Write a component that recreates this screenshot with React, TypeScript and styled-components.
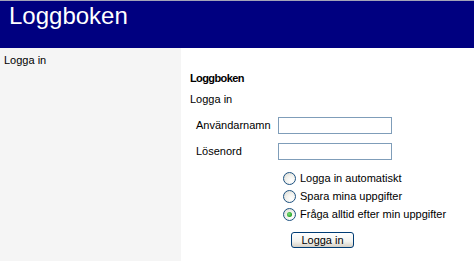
import React from "react";
import styled, { createGlobalStyle } from "styled-components";

const Global = createGlobalStyle`
  html, body { margin: 0; padding: 0; background: #ffffff; }
  body { font-family: "Liberation Sans", Tahoma, Arial, sans-serif; font-size: 11px; color: #000; }
`;

const Page = styled.div`
  display: flex;
  flex-direction: column;
  min-height: 100vh;
`;

const Header = styled.header`
  border-top: 1px solid #a3a3b8;
  background: #000080;
  padding: 1px 0 0 9px;
  box-sizing: border-box;
  height: 48px;
`;

const Title = styled.h1`
  margin: 0;
  font-family: "Liberation Sans", Arial, sans-serif;
  font-weight: normal;
  font-size: 24px;
  line-height: 28px;
  color: #ffffff;
`;

const Body = styled.div`
  flex: 1;
  display: flex;
`;

const Sidebar = styled.nav`
  width: 181px;
  flex: none;
  background: #f5f5f5;
  padding: 6px 4px;
  box-sizing: border-box;
  line-height: 13px;
`;

const Main = styled.main`
  flex: 1;
  padding: 24px 0 0 9px;
  line-height: 13px;
`;

const Heading = styled.div`
  font-weight: bold;
  letter-spacing: -0.6px;
`;

const Sub = styled.div`
  margin-top: 8px;
`;

const Form = styled.form`
  display: grid;
  grid-template-columns: 82px auto;
  grid-auto-rows: auto;
  row-gap: 9px;
  margin: 11px 0 0 6px;
  align-items: center;
`;

const Label = styled.label`
  line-height: 13px;
`;

const Input = styled.input`
  width: 114px;
  height: 17px;
  box-sizing: border-box;
  border: 1px solid #7f9db9;
  margin: 0;
  padding: 1px 2px;
  font-family: inherit;
  font-size: 11px;
  outline: none;
`;

const Options = styled.div`
  grid-column: 2;
  display: flex;
  flex-direction: column;
  gap: 5px;
  margin-top: 3px;
`;

const OptionRow = styled.label`
  display: flex;
  align-items: center;
  gap: 4px;
  padding-left: 5px;
  line-height: 13px;
`;

const Radio = styled.span<{ $checked?: boolean }>`
  width: 13px;
  height: 13px;
  box-sizing: border-box;
  border-radius: 50%;
  border: 1px solid #1c5180;
  background: radial-gradient(circle at 65% 70%, #ffffff 0%, #f2f2ee 45%, #d6d6cf 100%);
  position: relative;
  flex: none;
  &::after {
    content: "";
    display: ${(p) => (p.$checked ? "block" : "none")};
    position: absolute;
    left: 3px;
    top: 3px;
    width: 5px;
    height: 5px;
    border-radius: 50%;
    background: radial-gradient(circle at 40% 40%, #7fe07f 0%, #21a121 70%);
  }
`;

const ButtonCell = styled.div`
  grid-column: 2;
  padding-left: 13px;
  margin-top: 2px;
`;

const Button = styled.button`
  width: 63px;
  height: 16px;
  box-sizing: border-box;
  border: 1px solid #003c74;
  border-radius: 3px;
  background: linear-gradient(#ffffff, #f3f3ef 60%, #d6d0c5);
  font-family: inherit;
  font-size: 11px;
  line-height: 12px;
  padding: 0;
  color: #000;
`;

const options = [
  { text: "Logga in automatiskt", checked: false },
  { text: "Spara mina uppgifter", checked: false },
  { text: "Fråga alltid efter min uppgifter", checked: true },
];

export default function App() {
  return (
    <Page>
      <Global />
      <Header>
        <Title>Loggboken</Title>
      </Header>
      <Body>
        <Sidebar>Logga in</Sidebar>
        <Main>
          <Heading>Loggboken</Heading>
          <Sub>Logga in</Sub>
          <Form onSubmit={(e) => e.preventDefault()}>
            <Label htmlFor="user">Användarnamn</Label>
            <Input id="user" type="text" />
            <Label htmlFor="pass">Lösenord</Label>
            <Input id="pass" type="password" />
            <Options>
              {options.map((o) => (
                <OptionRow key={o.text}>
                  <Radio $checked={o.checked} />
                  {o.text}
                </OptionRow>
              ))}
            </Options>
            <ButtonCell>
              <Button type="submit">Logga in</Button>
            </ButtonCell>
          </Form>
        </Main>
      </Body>
    </Page>
  );
}
